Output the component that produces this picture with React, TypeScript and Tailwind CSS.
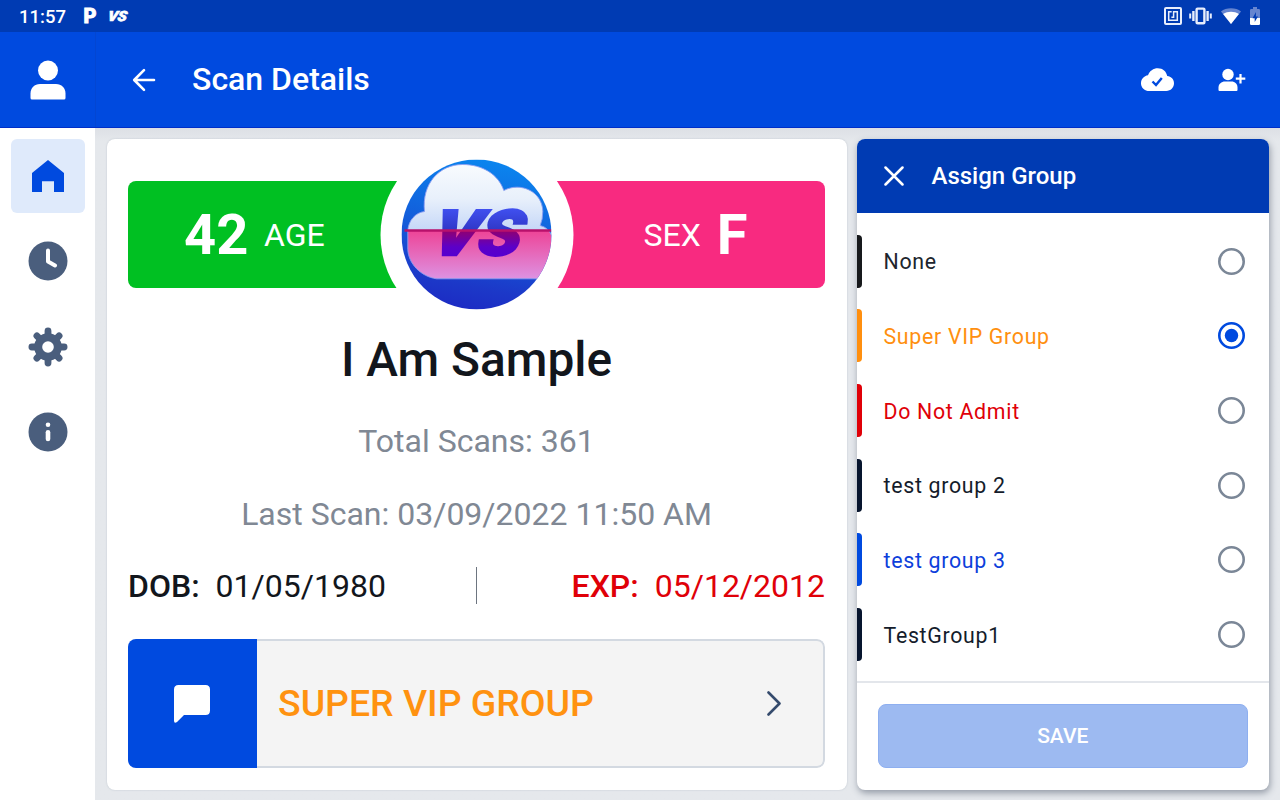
import type { ReactNode } from "react";

const groups = [
  { name: "None", text: "text-[#20252d]", bar: "bg-[#17191c]" },
  { name: "Super VIP Group", text: "text-[#ff8f0f]", bar: "bg-[#ff8f0f]", selected: true },
  { name: "Do Not Admit", text: "text-[#e00008]", bar: "bg-[#e00008]" },
  { name: "test group 2", text: "text-[#141c2b]", bar: "bg-[#07152e]" },
  { name: "test group 3", text: "text-[#0d3fdb]", bar: "bg-[#004adf]" },
  { name: "TestGroup1", text: "text-[#141c2b]", bar: "bg-[#07152e]" },
];

function StatusBar() {
  return (
    <div className="flex h-8 shrink-0 items-center justify-between bg-[#003bb3] pl-[19px] pr-5 text-white">
      <div className="flex items-center">
        <span className="w-[61px] pt-px text-[18.5px] font-medium leading-8">11:57</span>
        <svg width="22" height="30" viewBox="-2 -5 22 30" fill="currentColor">
          <text x="1.500" y="17" fontSize="20" fontWeight="900" stroke="currentColor" strokeWidth="0.8" textLength="13" lengthAdjust="spacingAndGlyphs">P</text>
        </svg>
        <svg className="ml-[3px]" width="30" height="28" viewBox="-3 -7 30 28" fill="currentColor">
          <text x="1.500" y="12" fontSize="14" fontWeight="900" fontStyle="italic" stroke="currentColor" strokeWidth="0.7" textLength="19" lengthAdjust="spacingAndGlyphs" transform="skewX(-10)">VS</text>
        </svg>
      </div>
      <div className="flex items-center">
        <svg width="18" height="18" viewBox="0 0 18 18" fill="none" stroke="#e8eefc" strokeWidth="2">
          <rect x="1" y="1" width="16" height="16" rx="1" />
          <path d="M7.700 4.700H4.700v8.600h8.600V4.700H9.600v5.600H7.400" strokeWidth="1.500" />
        </svg>
        <svg className="ml-[7px]" width="23" height="18" viewBox="0 0 23 18" fill="none" stroke="#e8eefc">
          <rect x="7.6" y="1.6" width="7.8" height="14.6" rx="1" strokeWidth="2.400" />
          <path d="M4.400 4v10M18.600 4v10" strokeWidth="2.400" />
          <path d="M1.200 6.500v5M21.800 6.500v5" strokeWidth="2" />
        </svg>
        <svg className="ml-[9px]" width="20" height="16" viewBox="0 0 20 16">
          <path d="M10 16L0 3.5C2.6 1.3 6 .2 10 .2s7.4 1.1 10 3.3z" fill="#6685d0" />
          <path d="M10 16L2.100 6C4.600 4.500 7 3.800 10 3.800s5.400.7 7.900 2.200z" fill="#fff" />
        </svg>
        <svg className="ml-[9px]" width="10" height="18" viewBox="0 0 10 18">
          <path d="M0 3.2Q0 2 1.2 2H3V0h4v2h1.8Q10 2 10 3.2V11H0z" fill="#6685d0" />
          <path d="M0 11h10v5.8q0 1.2-1.2 1.2H1.2Q0 18 0 16.800z" fill="#fff" />
          <path d="M6 5L2.500 11.300H4.700V15L8 9.400H5.800z" fill="#003bb3" />
        </svg>
      </div>
    </div>
  );
}

function Header() {
  return (
    <header className="flex h-24 shrink-0 items-center border-b border-[#002fc8] bg-[#004adf] text-white">
      <div className="flex h-full w-24 items-center justify-center border-r border-[#0346d2]">
        <svg width="36" height="40" viewBox="0 0 36 40" fill="currentColor">
          <circle cx="18" cy="10.500" r="10" />
          <path d="M.5 38V33.500C.5 28 4.500 24 10 24h16c5.500 0 9.500 4 9.500 9.500V38q0 1.500-1.500 1.500H2Q.5 39.500.5 38z" />
        </svg>
      </div>
      <svg className="ml-9" width="24" height="24" viewBox="0 0 24 24" fill="none" stroke="currentColor" strokeWidth="2.600" strokeLinecap="round" strokeLinejoin="round">
        <path d="M22 12H2.500M12 2.200L2.200 12l9.800 9.800" />
      </svg>
      <h1 className="-mt-px ml-9 text-[32px] font-medium leading-none">Scan Details</h1>
      <svg className="ml-auto" width="33" height="24" viewBox="0 0 33 24">
        <path d="M8.500 23C3.500 23 0 19.700 0 15.200 0 11 3 7.800 7 7.200 8.600 3 12.400.3 16.800.3c5 0 8.700 3.200 9.400 7.800 4 .3 6.800 3.300 6.800 7.200 0 4.400-3.300 7.700-7.700 7.700z" fill="#fff" />
        <path d="M11.500 13.500l3.500 3.500 5.800-7" fill="none" stroke="#004adf" strokeWidth="2.400" />
      </svg>
      <svg className="ml-11 mr-[34px]" width="28" height="24" viewBox="0 0 28 24" fill="currentColor">
        <circle cx="10" cy="6.500" r="5.700" />
        <path d="M.5 22V19.500C.5 16 3.500 13.500 7 13.500h6.500c3.500 0 6 2.500 6 6V22q0 1-1 1h-17q-1 0-1-1z" />
        <path d="M22.500 6v9.500M17.800 10.700h9.500" fill="none" stroke="currentColor" strokeWidth="2.200" />
      </svg>
    </header>
  );
}

function NavItem({ active, children }: { active?: boolean; children: ReactNode }) {
  return (
    <div className={`flex h-[74px] w-[74px] items-center justify-center rounded-md ${active ? "bg-[#dfeafb] text-[#004adf]" : "text-[#4a5e7d]"}`}>
      <svg width="40" height="40" viewBox="0 0 40 40" fill="currentColor">
        {children}
      </svg>
    </div>
  );
}

function Sidebar() {
  return (
    <nav className="flex w-[95px] shrink-0 flex-col gap-[11.500px] bg-white pl-[11px] pt-[10.500px]">
      <NavItem active>
        <path d="M4 17L20 4l16 13V36H26V25.200H14V36H4z" />
      </NavItem>
      <NavItem>
        <circle cx="20" cy="20" r="19.500" />
        <path d="M20 9.500v11l7 4" fill="none" stroke="#fff" strokeWidth="4" strokeLinecap="round" strokeLinejoin="round" />
      </NavItem>
      <NavItem>
        <g stroke="currentColor" strokeWidth="6.800" strokeLinecap="round">
          <path d="M20 3.900v32.200M3.900 20h32.200M8.900 8.900l22.200 22.200M31.100 8.900L8.900 31.100" />
        </g>
        <circle cx="20" cy="20" r="13.800" />
        <circle cx="20" cy="20" r="5.800" fill="#fff" />
      </NavItem>
      <NavItem>
        <circle cx="20" cy="20" r="19.500" />
        <circle cx="20" cy="12.800" r="2.300" fill="#fff" />
        <path d="M20 20.200v6.800" stroke="#fff" strokeWidth="4.600" strokeLinecap="round" />
      </NavItem>
    </nav>
  );
}

function CloudLogo() {
  return (
    <svg width="150" height="150" viewBox="0 0 150 150">
      <defs>
        <linearGradient id="sky" x1="0.650" y1="0" x2="0.450" y2="1">
          <stop offset="0" stopColor="#0a86ef" />
          <stop offset="0.550" stopColor="#1458d8" />
          <stop offset="0.850" stopColor="#1c38c8" />
          <stop offset="1" stopColor="#1c2cc4" />
        </linearGradient>
        <linearGradient id="cloud" x1="0" y1="0" x2="0" y2="1">
          <stop offset="0" stopColor="#f8fbfe" />
          <stop offset="0.300" stopColor="#e8f0fb" />
          <stop offset="0.570" stopColor="#c6d8f8" />
          <stop offset="0.575" stopColor="#ee4396" />
          <stop offset="1" stopColor="#dd92e2" />
        </linearGradient>
        <linearGradient id="letters" gradientUnits="userSpaceOnUse" x1="0" y1="49" x2="0" y2="97">
          <stop offset="0" stopColor="#4050f0" />
          <stop offset="0.440" stopColor="#3038c8" />
          <stop offset="0.460" stopColor="#900070" />
          <stop offset="0.800" stopColor="#5c00c8" />
          <stop offset="1" stopColor="#5500cf" />
        </linearGradient>
        <clipPath id="disc">
          <circle cx="75" cy="75" r="75" />
        </clipPath>
      </defs>
      <g clipPath="url(#disc)">
        <rect width="150" height="150" fill="url(#sky)" />
        <path
          d="M23 52C20 24 38 5 61 5c20 0 36 10 41.300 26C119 22 141 32 141.300 52q0 8-2.600 14Q147 68 150 76v20c-1 13-6 19-14 23.300H35C19 117 7 104 6.300 90V71C7 61 14 53 23 52z"
          fill="url(#cloud)"
          stroke="#8b9df0"
          strokeWidth="0.900"
        />
        <text
          x="49"
          y="96"
          fontSize="63"
          fontWeight="900"
          fontStyle="italic"
          fill="url(#letters)"
          stroke="url(#letters)"
          strokeWidth="2.500"
          textLength="89"
          lengthAdjust="spacingAndGlyphs"
          transform="skewX(-12)"
        >
          VS
        </text>
        <path d="M3 71h147" stroke="#b8116c" strokeWidth="2.500" />
      </g>
    </svg>
  );
}

function Banner() {
  return (
    <div className="relative flex h-[107px] shrink-0 text-white">
      <div className="flex flex-1 items-center rounded-l-lg bg-[#00c022] pl-14">
        <span className="w-20 text-[56px] font-bold leading-none">42</span>
        <span className="text-[32px] leading-none">AGE</span>
      </div>
      <div className="flex flex-1 items-center justify-end rounded-r-lg bg-[#f82a80] pr-[77.500px]">
        <span className="text-[32px] leading-none">SEX</span>
        <span className="ml-4 text-[56px] font-bold leading-none">F</span>
      </div>
      <div className="absolute left-1/2 top-1/2 flex h-[193px] w-[193px] -translate-x-1/2 -translate-y-1/2 items-center justify-center rounded-full bg-white">
        <CloudLogo />
      </div>
    </div>
  );
}

function ScanCard() {
  return (
    <section className="flex h-[651px] w-[740px] shrink-0 flex-col overflow-hidden rounded-lg bg-white px-[21.500px] pt-[42.500px] text-[#12161c] shadow-[0_0_2px_#bcc3cc]">
      <Banner />
      <div className="z-10 mt-[39.500px] flex flex-col items-center">
        <h2 className="text-[47.800px] font-medium leading-[64px]">I Am Sample</h2>
        <p className="mt-[28.500px] text-[32px] leading-[42px] text-[#808894]">Total Scans: 361</p>
        <p className="mt-[30.500px] text-[32px] leading-[42px] text-[#808894]">Last Scan: 03/09/2022 11:50 AM</p>
      </div>
      <div className="mt-8 flex h-[38px] items-center justify-between text-[32px]">
        <p className="flex flex-1 gap-4">
          <span className="font-medium">DOB:</span>
          <span>01/05/1980</span>
        </p>
        <div className="h-[37px] w-px bg-[#6d7580]" />
        <p className="flex flex-1 justify-end gap-4 text-[#e00008]">
          <span className="font-medium">EXP:</span>
          <span>05/12/2012</span>
        </p>
      </div>
      <div className="mt-[34.500px] flex h-[129px] shrink-0 overflow-hidden rounded-lg">
        <div className="flex w-[128.500px] items-center justify-center bg-[#004adf]">
          <svg width="36" height="38" viewBox="0 0 36 38" fill="#fff">
            <path d="M4.500 0h27Q36 0 36 4.500v21Q36 30 31.500 30H10L3 37Q0 39 0 35.500V4.500Q0 0 4.500 0z" />
          </svg>
        </div>
        <div className="flex flex-1 items-center justify-between rounded-r-lg border-2 border-l-0 border-[#d3d9e1] bg-[#f4f4f4] pl-[21.500px] pr-[42px]">
          <span className="text-[37.400px] font-medium text-[#ff9210]">SUPER VIP GROUP</span>
          <svg width="14" height="26" viewBox="0 0 14 26" fill="none" stroke="#354b6d" strokeWidth="2.600" strokeLinecap="round" strokeLinejoin="round">
            <path d="M1.500 1.500l11 11-11 11" />
          </svg>
        </div>
      </div>
    </section>
  );
}

function AssignGroup() {
  return (
    <aside className="flex h-[651px] w-[411.500px] shrink-0 flex-col overflow-hidden rounded-lg bg-white shadow-[1px_3px_7px_#9299a5]">
      <div className="flex h-[74px] shrink-0 items-center bg-[#003bb3] pl-[27px] text-white">
        <svg width="20" height="20" viewBox="0 0 20 20" fill="none" stroke="currentColor" strokeWidth="2.500" strokeLinecap="round">
          <path d="M1.500 1.500l17 17M18.500 1.500l-17 17" />
        </svg>
        <h2 className="ml-[27.500px] text-2xl font-medium">Assign Group</h2>
      </div>
      <div className="flex h-[470px] shrink-0 flex-col border-b-2 border-[#e3e6eb] pt-[11.500px]">
        {groups.map((group) => (
          <div key={group.name} className="flex h-[74.650px] shrink-0 items-center pr-6">
            <div className={`h-[53px] w-[5px] rounded-r ${group.bar}`} />
            <span className={`ml-[21.500px] flex-1 pt-[2px] text-[21.330px] leading-[26px] tracking-[0.700px] ${group.text}`}>{group.name}</span>
            <svg className={group.selected ? "text-[#004adf]" : "text-[#7b8797]"} width="27" height="27" viewBox="0 0 27 27" fill="none" stroke="currentColor" strokeWidth="2.600">
              <circle cx="13.500" cy="13.500" r="12.200" />
              {group.selected && <circle cx="13.500" cy="13.500" r="6.700" fill="currentColor" stroke="none" />}
            </svg>
          </div>
        ))}
      </div>
      <div className="px-[21px] pt-[21px]">
        <button className="h-16 w-full rounded-lg border border-[#8eaff0] bg-[#9dbaf1] pt-[3px] text-[21px] font-medium text-white">SAVE</button>
      </div>
    </aside>
  );
}

export default function App() {
  return (
    <div className="flex h-[800px] w-[1280px] flex-col overflow-hidden bg-[#e4e7eb] font-[Roboto,sans-serif]">
      <StatusBar />
      <Header />
      <div className="flex min-h-0 flex-1">
        <Sidebar />
        <main className="flex flex-1 gap-[10.500px] bg-linear-to-b from-[#dde0e5] via-[#e5e8ec] via-2% to-[#e5e8ec] pl-[11.500px] pt-[10.500px]">
          <ScanCard />
          <AssignGroup />
        </main>
      </div>
    </div>
  );
}
